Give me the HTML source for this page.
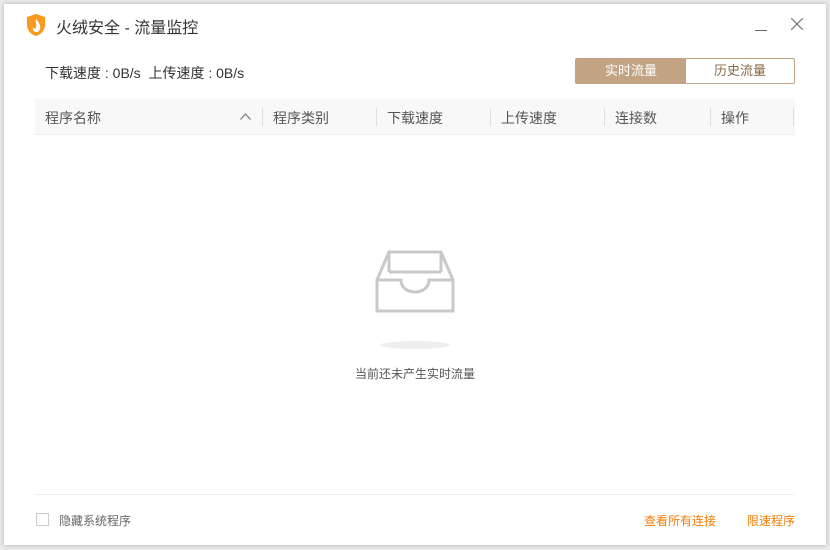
<!DOCTYPE html>
<html><head><meta charset="utf-8"><style>
*{margin:0;padding:0;box-sizing:border-box}
body{width:830px;height:550px;background:#e9e9e9;font-family:"Liberation Sans","Noto Sans CJK SC",sans-serif;position:relative;overflow:hidden}
.win{position:absolute;left:4px;top:4px;width:822px;height:541px;background:#fff;box-shadow:0 0 4px rgba(0,0,0,.25)}
.t{position:absolute;white-space:nowrap}
.hdr{position:absolute;left:35px;top:99px;width:760px;height:36px;background:#f8f8f8;border-bottom:1px solid #eee}
.hdr span{position:absolute;top:9px;font-size:14px;color:#555}
.sep{position:absolute;top:9px;width:1px;height:18px;background:#ddd}
</style></head><body>
<div class="win"></div>
<svg style="position:absolute;left:26px;top:13px" width="20" height="24" viewBox="0 0 20 24"><path d="M10 1 L19 4 V12 C19 18 14 22 10 23 C6 22 1 18 1 12 V4 Z" fill="#f79a1d"/><path d="M10 6 C13 10 15 12 14 16 C13 19 11 19 10 19 C8 19 6 17 7 14 C8 16 9 16 10 15 C11 12 9 9 10 6 Z" fill="#fff"/></svg>
<div class="t" style="left:56px;top:14px;font-size:16px;color:#333">火绒安全 - 流量监控</div>
<div style="position:absolute;left:755px;top:30px;width:12px;height:1px;background:#666"></div>
<svg style="position:absolute;left:791px;top:18px" width="12" height="12"><path d="M0 0L12 12M12 0L0 12" stroke="#777" stroke-width="1.2"/></svg>
<div class="t" style="left:45px;top:63px;font-size:14px;color:#333">下载速度 : 0B/s&nbsp;&nbsp;上传速度 : 0B/s</div>
<div style="position:absolute;left:575px;top:58px;width:220px;height:26px;border:1px solid #c2a383;border-radius:2px;overflow:hidden">
<div style="position:absolute;left:0;top:0;width:110px;height:24px;background:#c2a383;color:#fff;font-size:13px;text-align:center;line-height:24px">实时流量</div>
<div style="position:absolute;left:110px;top:0;width:108px;height:24px;color:#8a6a4a;font-size:13px;text-align:center;line-height:24px">历史流量</div></div>
<div class="hdr">
<span style="left:10px">程序名称</span>
<svg style="position:absolute;left:205px;top:14px" width="11" height="7"><path d="M0.5 6.5L5.5 1L10.5 6.5" fill="none" stroke="#777" stroke-width="1.2"/></svg>
<div class="sep" style="left:227px"></div><span style="left:238px">程序类别</span>
<div class="sep" style="left:341px"></div><span style="left:352px">下载速度</span>
<div class="sep" style="left:455px"></div><span style="left:466px">上传速度</span>
<div class="sep" style="left:569px"></div><span style="left:580px">连接数</span>
<div class="sep" style="left:675px"></div><span style="left:686px">操作</span>
<div class="sep" style="left:758px"></div>
</div>
<svg style="position:absolute;left:375px;top:250px" width="80" height="64" viewBox="0 0 80 64"><g fill="none" stroke="#c8c8c8" stroke-width="3"><path d="M2 30 L14 2 H66 L78 30 V61 H2 Z"/><path d="M14 2 V22 M66 2 V22"/><path d="M2 30 H26 C26 46 54 46 54 30 H78"/><path d="M14 22 H66"/></g></svg>
<div style="position:absolute;left:380px;top:341px;width:70px;height:8px;border-radius:50%;background:#eee"></div>
<div class="t" style="left:355px;top:365px;font-size:12px;color:#555">当前还未产生实时流量</div>
<div style="position:absolute;left:35px;top:494px;width:760px;height:1px;background:#ececec"></div>
<div style="position:absolute;left:36px;top:513px;width:13px;height:13px;border:1px solid #ccc"></div>
<div class="t" style="left:59px;top:512px;font-size:12px;color:#666">隐藏系统程序</div>
<div class="t" style="left:644px;top:512px;font-size:12px;color:#f57c00">查看所有连接</div>
<div class="t" style="left:747px;top:512px;font-size:12px;color:#f57c00">限速程序</div>
</body></html>
